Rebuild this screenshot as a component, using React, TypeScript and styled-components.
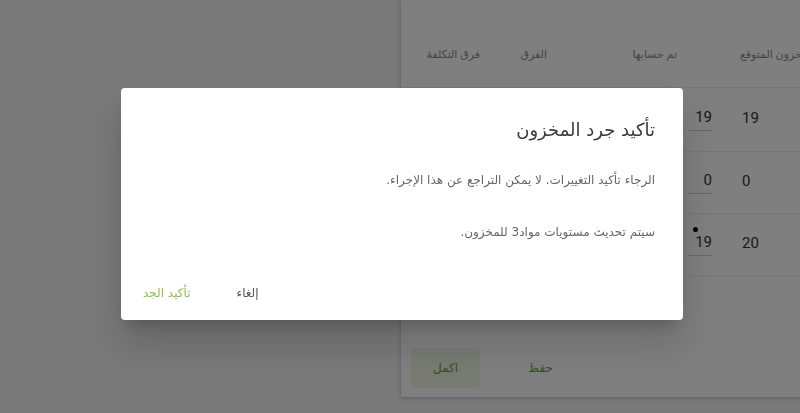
import React from 'react';
import styled, { createGlobalStyle } from 'styled-components';

const GlobalStyle = createGlobalStyle`
    html, body {
        margin: 0;
        padding: 0;
        background: #f2f2f2;
        font-family: Roboto, "DejaVu Sans", sans-serif;
        overflow: hidden;
    }
`;

const Page = styled.div`
    height: 413px;
    padding-left: 401px;
    box-sizing: border-box;
`;

const Panel = styled.div`
    width: 430px;
    height: 397px;
    background: #fff;
    box-shadow: 0 1px 4px rgba(0, 0, 0, 0.25);
    display: flex;
    flex-direction: column;
`;

const Grid = styled.div<{ $height: number }>`
    display: grid;
    grid-template-columns: 85px 67px 130px 52px 1fr;
    height: ${p => p.$height}px;
    align-items: center;
    border-bottom: 1px solid #ededed;
    box-sizing: border-box;
`;

const HeadCell = styled.div`
    direction: rtl;
    text-align: right;
    white-space: nowrap;
    font-size: 11px;
    color: #8a8a8a;
    padding-right: 6px;
    padding-top: 22px;
`;

const HeadOverflow = styled(HeadCell)`
    grid-column: 5;
    direction: ltr;
    text-align: left;
    padding-left: 5px;
    padding-right: 0;
`;

const InputCell = styled.div`
    position: relative;
    margin-left: 5px;
    width: 24px;
    font-size: 15px;
    color: #333;
    text-align: right;
    padding-bottom: 4px;
    border-bottom: 1px solid #cfcfcf;
`;

const Dot = styled.span`
    position: absolute;
    left: 5px;
    top: -6px;
    width: 5px;
    height: 5px;
    border-radius: 50%;
    background: #000;
`;

const ValueCell = styled.div`
    font-size: 15px;
    color: #333;
    padding-left: 7px;
    padding-bottom: 4px;
`;

const Footer = styled.div`
    margin-top: auto;
    padding: 0 0 9px 10px;
    display: flex;
    align-items: center;
    gap: 26px;
`;

const PanelButton = styled.button<{ $filled?: boolean }>`
    font-family: "DejaVu Sans", sans-serif;
    font-size: 12px;
    color: #689f38;
    background: ${p => (p.$filled ? 'rgba(139, 195, 74, 0.14)' : 'transparent')};
    border: none;
    border-radius: 4px;
    height: 40px;
    padding: 0 22px;
    direction: rtl;
`;

const Overlay = styled.div`
    position: fixed;
    inset: 0;
    background: rgba(0, 0, 0, 0.5);
    display: flex;
    align-items: center;
    justify-content: center;
`;

const Dialog = styled.div`
    width: 562px;
    height: 232px;
    margin-left: 4px;
    margin-top: -6px;
    background: #fff;
    border-radius: 4px;
    box-shadow: 0 11px 15px -7px rgba(0, 0, 0, 0.2), 0 24px 38px 3px rgba(0, 0, 0, 0.14);
    direction: rtl;
    font-family: "DejaVu Sans", sans-serif;
    padding-top: 28px;
    box-sizing: border-box;
    display: flex;
    flex-direction: column;
`;

const Title = styled.h2`
    margin: 0;
    padding: 0 28px;
    font-size: 18px;
    font-weight: normal;
    line-height: 28px;
    color: #3a3a3a;
`;

const Text = styled.p<{ $gap: number }>`
    margin: ${p => p.$gap}px 0 0;
    padding: 0 28px;
    font-size: 12px;
    line-height: 20px;
    color: #666;
`;

const Actions = styled.div`
    margin-top: auto;
    padding: 0 6px 9px;
    display: flex;
    justify-content: flex-end;
    gap: 14px;
`;

const DialogButton = styled.button<{ $primary?: boolean }>`
    font-family: "DejaVu Sans", sans-serif;
    font-size: 12px;
    height: 36px;
    padding: 0 16px;
    border: none;
    background: transparent;
    border-radius: 4px;
    color: ${p => (p.$primary ? '#8bc34a' : '#555')};
    direction: rtl;
`;

const rows = [
    { counted: '19', expected: '19', dirty: false },
    { counted: '0', expected: '0', dirty: false },
    { counted: '19', expected: '20', dirty: true },
];

const App: React.FC = () => {
    return (
        <>
            <GlobalStyle />
            <Page>
                <Panel>
                    <Grid $height={88}>
                        <HeadCell>فرق التكلفة</HeadCell>
                        <HeadCell>الفرق</HeadCell>
                        <HeadCell>تم حسابها</HeadCell>
                        <HeadOverflow>المخزون المتوقع</HeadOverflow>
                    </Grid>
                    {rows.map((r, i) => (
                        <Grid key={i} $height={i === 0 ? 64 : 62}>
                            <div />
                            <div />
                            <div />
                            <InputCell>
                                {r.dirty && <Dot />}
                                {r.counted}
                            </InputCell>
                            <ValueCell>{r.expected}</ValueCell>
                        </Grid>
                    ))}
                    <Footer>
                        <PanelButton $filled>اكمل</PanelButton>
                        <PanelButton>حفظ</PanelButton>
                    </Footer>
                </Panel>
            </Page>
            <Overlay>
                <Dialog>
                    <Title>تأكيد جرد المخزون</Title>
                    <Text $gap={26}>الرجاء تأكيد التغييرات. لا يمكن التراجع عن هذا الإجراء.</Text>
                    <Text $gap={32}>سيتم تحديث مستويات مواد3 للمخزون.</Text>
                    <Actions>
                        <DialogButton>إلغاء</DialogButton>
                        <DialogButton $primary>تأكيد الجد</DialogButton>
                    </Actions>
                </Dialog>
            </Overlay>
        </>
    );
};

export default App;
